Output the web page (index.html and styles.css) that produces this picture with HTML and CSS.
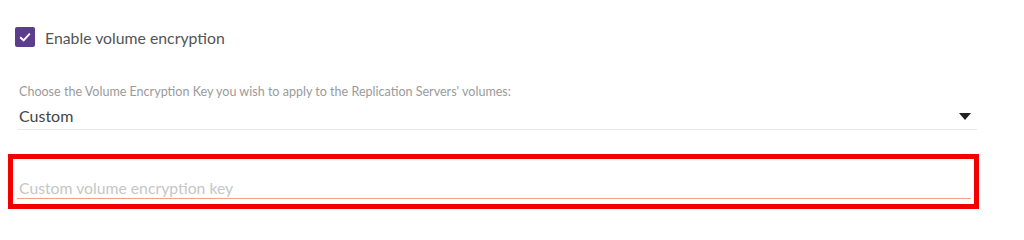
FILE: index.html
```html
<!DOCTYPE html>
<html>
<head>
<meta charset="utf-8">
<link rel="stylesheet" href="styles.css">
</head>
<body>
<div class="page">
  <label class="check-row">
    <span class="checkbox">
      <svg viewBox="0 0 20 20" width="20" height="20"><path d="M5.2 10.2 L8.6 13.4 L14.8 6.6" fill="none" stroke="#fff" stroke-width="2"/></svg>
    </span>
    <span class="check-label">Enable volume encryption</span>
  </label>
  <div class="field select-field">
    <div class="field-label">Choose the Volume Encryption Key you wish to apply to the Replication Servers' volumes:</div>
    <div class="select-row">
      <span class="select-value">Custom</span>
      <span class="arrow"></span>
    </div>
  </div>
  <div class="highlight">
    <div class="input-row">
      <span class="placeholder">Custom volume encryption key</span>
    </div>
  </div>
</div>
</body>
</html>
```
FILE: styles.css
```css
html, body {
  margin: 0;
  padding: 0;
  background: #fff;
}
body {
  font-family: Lato, "Open Sans", sans-serif;
  color: #333;
}
.page {
  width: 1024px;
  height: 240px;
  padding-top: 27px;
  box-sizing: border-box;
}
.check-row {
  display: flex;
  align-items: center;
  margin-left: 15px;
  height: 20px;
}
.checkbox {
  width: 20px;
  height: 20px;
  border-radius: 2px;
  background: #5b3d8e;
  display: flex;
}
.check-label {
  margin-left: 10px;
  font-size: 15.8px;
  color: #555;
}
.select-field {
  margin: 37px 47px 0 18px;
}
.field-label {
  font-size: 12.55px;
  color: #9a9a9a;
  padding-left: 1px;
  line-height: 15px;
}
.select-row {
  display: flex;
  align-items: center;
  justify-content: space-between;
  height: 27px;
  border-bottom: 1px solid #e8e8e8;
  margin-top: 3px;
}
.select-value {
  font-size: 16px;
  color: #444;
  padding-left: 1px;
}
.arrow {
  width: 0;
  height: 0;
  border-left: 6px solid transparent;
  border-right: 6px solid transparent;
  border-top: 7px solid #222;
  margin-right: 6px;
  margin-top: 2px;
}
.highlight {
  margin: 24px 0 0 8px;
  width: 971px;
  height: 55px;
  box-sizing: border-box;
  border: 5px solid #f20000;
  padding: 0 3px 0 4px;
  display: flex;
  flex-direction: column;
  justify-content: flex-end;
}
.input-row {
  border-bottom: 1px solid #f2a08c;
  height: 28px;
  display: flex;
  align-items: flex-end;
  padding-bottom: 1px;
  box-sizing: border-box;
  margin-bottom: 5px;
}
.placeholder {
  font-size: 15.75px;
  color: #c6c6c6;
  padding-left: 2px;
}
```
